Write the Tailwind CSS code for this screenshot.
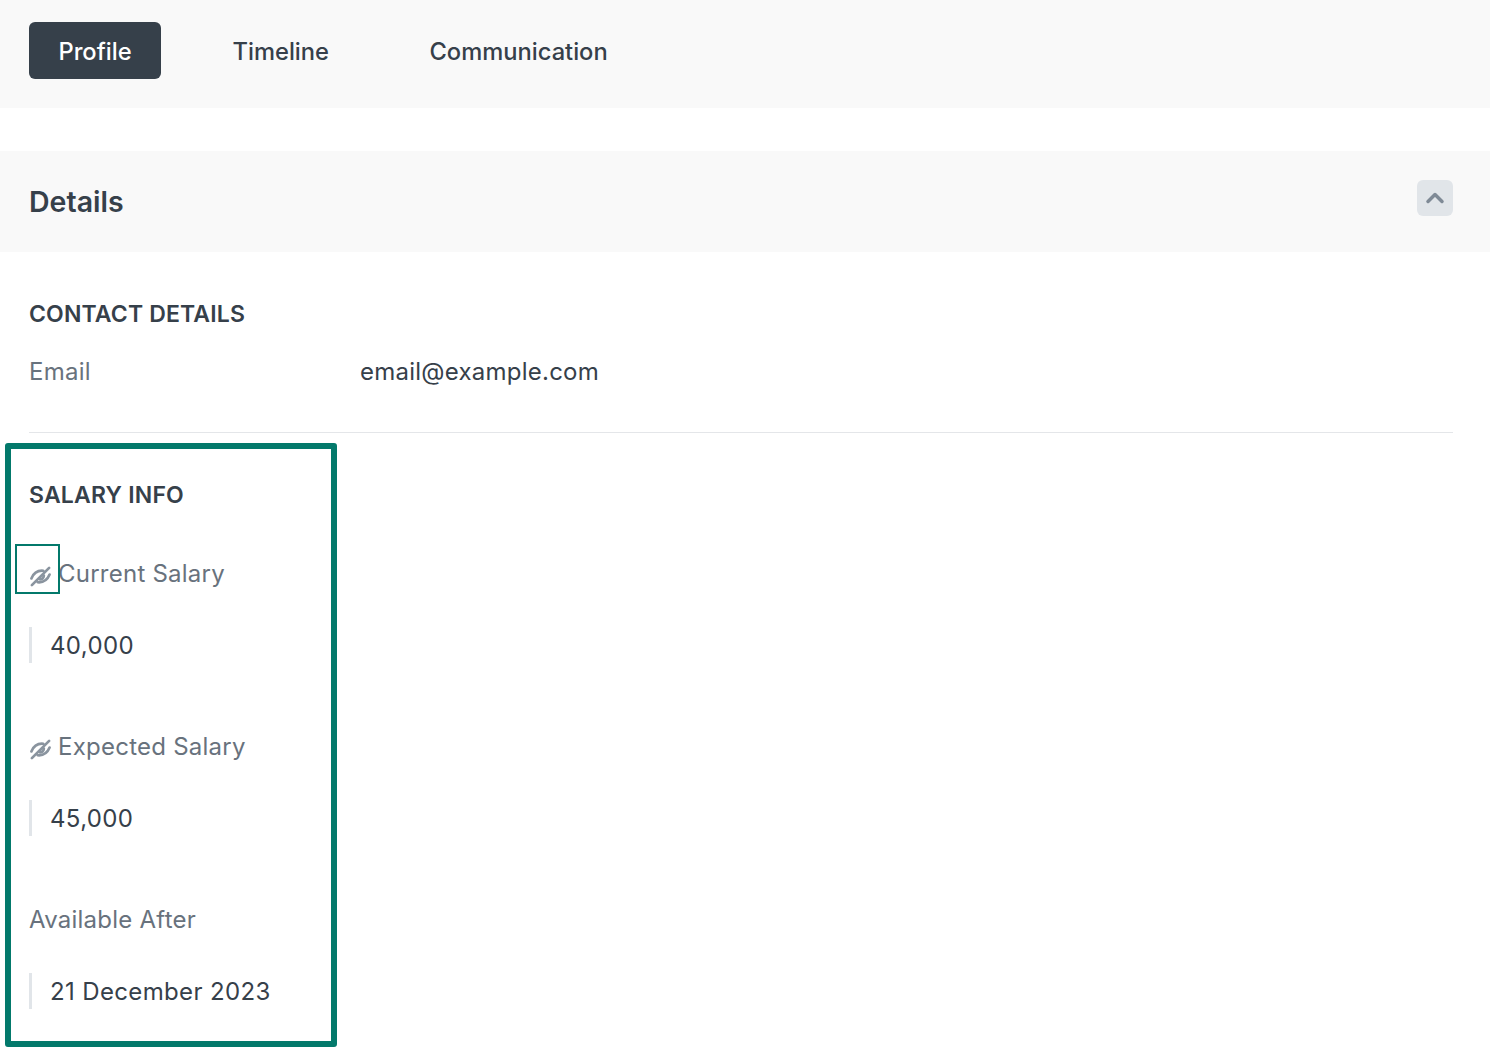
<!DOCTYPE html>
<html lang="en">
<head>
    <meta charset="UTF-8">
    <meta name="viewport" content="width=device-width, initial-scale=1.0">
    <script src="https://cdn.jsdelivr.net/npm/@tailwindcss/browser@4"></script>
    <title>Profile</title>
</head>
<body class="bg-white font-['Inter',sans-serif] text-[#36404a] overflow-hidden h-[1062px]">

    <!-- tabs -->
    <nav class="h-[108px] bg-[#f9f9f9] flex items-start gap-[42.5px] pl-[29px] pt-[22px] text-[23.7px] font-medium">
        <a class="h-[57px] w-[132px] pt-[2px] flex items-center justify-center rounded-[6px] bg-[#36404a] text-white">Profile</a>
        <a class="h-[57px] px-[29px] pt-[2px] flex items-center">Timeline</a>
        <a class="h-[57px] px-[29px] pt-[2px] flex items-center">Communication</a>
    </nav>

    <!-- details header -->
    <section class="mt-[43px] h-[101px] bg-[#f9f9f9] flex items-center justify-between pl-[29px] pr-[37px]">
        <h2 class="text-[28.5px] pt-[2px] font-semibold">Details</h2>
        <button class="w-[36px] h-[36px] mb-[8px] rounded-[6px] bg-[#e1e5e9] flex items-center justify-center">
            <svg class="w-[24px] h-[24px]" viewBox="0 0 24 24" fill="none" stroke="#7f8a96" stroke-width="3.500" stroke-linecap="round" stroke-linejoin="round"><path d="M5 15.500l7-7 7 7"/></svg>
        </button>
    </section>

    <!-- contact -->
    <section class="ml-[29px] mr-[37px] pt-[47px] h-[181px] border-b border-[#e4e6e9]">
        <h3 class="text-[23px] leading-[30px] font-semibold tracking-[0.15px]">CONTACT DETAILS</h3>
        <div class="flex mt-[27px] text-[24px] leading-[32px] tracking-[0.24px]">
            <span class="w-[331px] text-[#68727d]">Email</span>
            <span>email@example.com</span>
        </div>
    </section>

    <!-- salary -->
    <section class="relative ml-[5px] mt-[10px] w-[332px] h-[604px] border-[6px] border-[#03796b] rounded-[3px] pl-[18px] pt-[31px] text-[24px] tracking-[0.24px]">
        <h3 class="text-[23px] leading-[30px] font-semibold tracking-[0.2px]">SALARY INFO</h3>

        <span class="absolute left-[4px] top-[95px] w-[45px] h-[50px] border-2 border-[#03796b]"></span>

        <div class="flex items-center mt-[48px] h-[32px] text-[#68727d]">
            <svg class="w-[23px] h-[23px] mr-[6px] mt-[4px]" viewBox="0 0 24 24" fill="none" stroke="#8a949f" stroke-width="2.800" stroke-linecap="round"><path d="M3 21L21 3"/><path d="M2.500 14C5 8 10 5.500 15 6"/><path d="M21.500 10C19 16 14 18.500 9 18"/><path d="M15.500 11a4 4 0 0 1-4 4"/></svg>
            <span>Current Salary</span>
        </div>
        <div class="mt-[37px] h-[36px] pt-[2px] border-l-[3px] border-[#e1e5e9] pl-[18px] flex items-center tracking-[0.36px]">40,000</div>

        <div class="flex items-center mt-[68px] h-[32px] text-[#68727d]">
            <svg class="w-[23px] h-[23px] mr-[6px] mt-[4px]" viewBox="0 0 24 24" fill="none" stroke="#8a949f" stroke-width="2.800" stroke-linecap="round"><path d="M3 21L21 3"/><path d="M2.500 14C5 8 10 5.500 15 6"/><path d="M21.500 10C19 16 14 18.500 9 18"/><path d="M15.500 11a4 4 0 0 1-4 4"/></svg>
            <span>Expected Salary</span>
        </div>
        <div class="mt-[37px] h-[36px] pt-[2px] border-l-[3px] border-[#e1e5e9] pl-[18px] flex items-center tracking-[0.36px]">45,000</div>

        <div class="flex items-center mt-[68px] h-[32px] text-[#68727d]">
            <span>Available After</span>
        </div>
        <div class="mt-[37px] h-[36px] pt-[2px] border-l-[3px] border-[#e1e5e9] pl-[18px] flex items-center tracking-[0.36px]">21 December 2023</div>
    </section>

</body>
</html>
